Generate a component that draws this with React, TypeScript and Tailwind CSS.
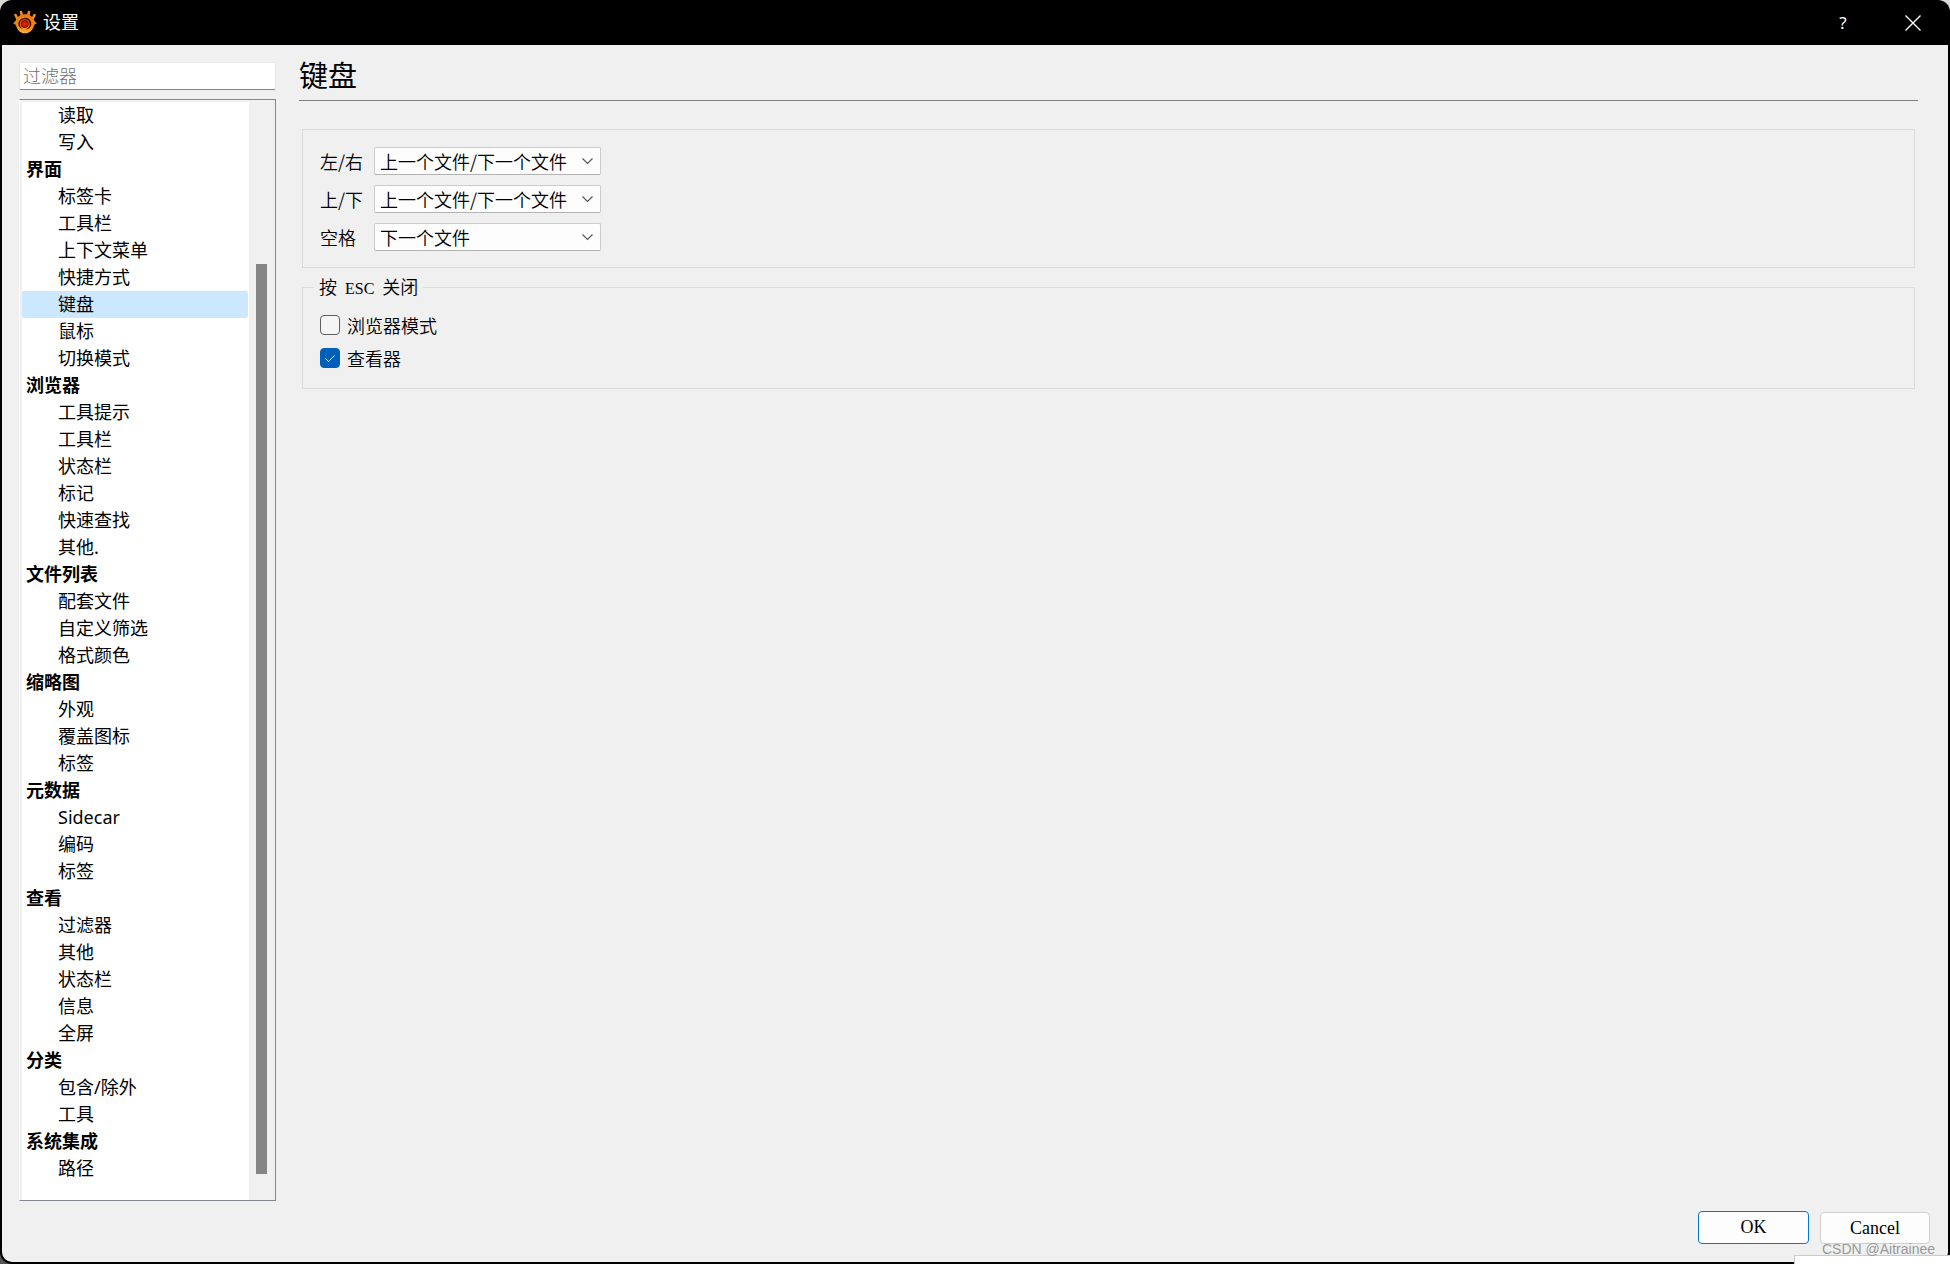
import React from "react";

type Entry = { label: string; heading?: boolean; selected?: boolean };

const h = (label: string): Entry => ({ label, heading: true });
const i = (label: string): Entry => ({ label });

const entries: Entry[] = [
  i("读取"), i("写入"),
  h("界面"), i("标签卡"), i("工具栏"), i("上下文菜单"), i("快捷方式"),
  { label: "键盘", selected: true }, i("鼠标"), i("切换模式"),
  h("浏览器"), i("工具提示"), i("工具栏"), i("状态栏"), i("标记"), i("快速查找"), i("其他."),
  h("文件列表"), i("配套文件"), i("自定义筛选"), i("格式颜色"),
  h("缩略图"), i("外观"), i("覆盖图标"), i("标签"),
  h("元数据"), i("Sidecar"), i("编码"), i("标签"),
  h("查看"), i("过滤器"), i("其他"), i("状态栏"), i("信息"), i("全屏"),
  h("分类"), i("包含/除外"), i("工具"),
  h("系统集成"), i("路径"),
];

function Logo() {
  return (
    <svg width="26" height="24" viewBox="0 0 26 24" aria-hidden="true">
      <defs>
        <linearGradient id="flame" x1="0" y1="0" x2="0" y2="1">
          <stop offset="0" stopColor="#f47a10" />
          <stop offset="0.6" stopColor="#f08418" />
          <stop offset="1" stopColor="#fbb23a" />
        </linearGradient>
        <radialGradient id="pupil">
          <stop offset="0" stopColor="#e03a24" />
          <stop offset="0.6" stopColor="#c01408" />
          <stop offset="1" stopColor="#8e0c04" />
        </radialGradient>
      </defs>
      <g stroke="#f58a1c" strokeWidth="2.600" strokeLinecap="round" fill="none">
        <path d="M5.500 9 L3.500 5" />
        <path d="M10 6 L9 2" />
        <path d="M16 6 L17 2" />
        <path d="M20.500 9 L22.500 5" />
      </g>
      <path d="M13 4.200 C17 4.200 20 6 21.500 9 C22.500 11 23.500 12.500 25 13.200 C22.500 14 22 15 21.500 17 C20 21 17 23.300 13 23.300 C9 23.300 6 21 4.500 17 C4 15 3.500 14 1 13.200 C2.500 12.500 3.500 11 4.500 9 C6 6 9 4.200 13 4.200 Z" fill="url(#flame)" />
      <path d="M12 8 C16.500 7 19.300 10 19.300 14 C19.300 17 17 19.300 13.500 19.500 C17 18 17.800 16 17.500 13.500 C17 10.500 14.500 9 11.500 9.500 C9 10 7.800 12 8 14.500 C8.200 16.500 9.200 18 11 19 C8 18.500 6.300 16.500 6.300 14 C6.300 11 8.500 8.500 12 8 Z" fill="#4a1c04" />
      <circle cx="12.700" cy="14" r="4" fill="url(#pupil)" />
    </svg>
  );
}

function Choice({ id, label, value, options }: { id: string; label: React.ReactNode; value: string; options: string[] }) {
  return (
    <div className="flex h-7 items-center">
      <label htmlFor={id} className="w-[54px] shrink-0 whitespace-nowrap">{label}</label>
      <div className="relative">
        <select
          id={id}
          defaultValue={value}
          className="block h-7 w-[227px] appearance-none rounded-[2px] border border-[#cccccc] border-b-[#b4b4b4] bg-[#fdfdfd] pl-[5px] pr-7 text-[18px] leading-6 outline-none"
        >
          {options.map((o) => (
            <option key={o}>{o}</option>
          ))}
        </select>
        <svg className="pointer-events-none absolute right-2 top-2.5" width="11" height="8" viewBox="0 0 11 8" fill="none" stroke="#555" strokeWidth="1.200" aria-hidden="true">
          <path d="M0.500 1.500 L5.500 6.500 L10.500 1.500" />
        </svg>
      </div>
    </div>
  );
}

function Tick({ label, checked }: { label: string; checked?: boolean }) {
  return (
    <label className="flex h-6 items-center gap-[7px]">
      <span className="relative block size-5">
        <input
          type="checkbox"
          defaultChecked={checked}
          className="peer block size-5 appearance-none rounded-[4px] border border-[#606060] bg-[#f5f5f5] checked:border-[#005fb8] checked:bg-[#005fb8]"
        />
        <svg className="pointer-events-none absolute inset-0 hidden peer-checked:block" width="20" height="20" viewBox="0 0 20 20" fill="none" stroke="#fff" aria-hidden="true">
          <path d="M5.500 10.500 L8.500 13.500 L14.500 7.500" />
        </svg>
      </span>
      <span>{label}</span>
    </label>
  );
}

const fileOptions = ["上一个文件/下一个文件", "下一个文件"];

export default function App() {
  return (
    <div className="relative flex min-h-screen flex-col bg-[linear-gradient(#d9dcd9_50%,#555_50%)] font-['Noto_Sans','Noto_Sans_CJK_SC',sans-serif] text-[18px] text-black">
      <div className="flex flex-1 flex-col overflow-hidden rounded-[12px] bg-black px-0.5 pb-0.5">
        <header className="flex h-[45px] items-center justify-between pl-2.5 text-white">
          <div className="flex items-center gap-[5px] pb-0.5">
            <Logo />
            <span className="leading-6">设置</span>
          </div>
          <div className="flex self-stretch">
            <button aria-label="帮助" className="flex w-[70px] items-center justify-center text-[17px]">?</button>
            <button aria-label="关闭" className="flex w-[70px] items-center justify-center">
              <svg width="16" height="16" viewBox="0 0 16 16" stroke="#fff" strokeWidth="1.400" aria-hidden="true">
                <path d="M0.500 0.500 L15.500 15.500 M15.500 0.500 L0.500 15.500" />
              </svg>
            </button>
          </div>
        </header>

        <div className="flex flex-1 flex-col rounded-b-[10px] bg-[#f0f0f0]">
          <div className="flex flex-1">
            <aside className="ml-[17px] flex w-[257px] shrink-0 flex-col pt-[17px]">
              <input
                type="text"
                aria-label="过滤器"
                placeholder="过滤器"
                className="h-7 rounded-[2px] border border-[#e8e8e8] border-b-[#868686] bg-white px-[3px] text-[18px] font-light outline-none placeholder:text-[#707070]"
              />
              <div className="mt-[9px] flex flex-1 border-y border-l border-r border-y-[#828790] border-l-white border-r-[#828790] pl-0.5 pt-0.5">
                <nav aria-label="设置" className="flex-1 bg-white">
                  <ul>
                    {entries.map((e, n) => (
                      <li key={n}>
                        <a
                          href="#"
                          aria-current={e.selected ? "page" : undefined}
                          className={
                            e.heading
                              ? "block h-[27px] pl-1 font-bold leading-[27px]"
                              : e.selected
                                ? "mr-px block h-[27px] rounded-[2px] bg-[#cce8ff] pl-9 leading-[27px]"
                                : "block h-[27px] pl-9 leading-[27px]"
                          }
                        >
                          {e.label}
                        </a>
                      </li>
                    ))}
                  </ul>
                </nav>
                <div className="flex w-[26px] flex-col pb-[26px] pl-[7px] pt-[162px]">
                  <div className="w-[11px] flex-1 bg-[#858585]" />
                </div>
              </div>
            </aside>

            <main className="ml-[23px] mr-[30px] flex-1 font-['Noto_Sans_CJK_SC',sans-serif]">
              <h1 className="mt-2 h-[48px] border-b border-[#808080] text-[29px] leading-[42px]">键盘</h1>
              <section className="mx-[3px] mt-7 flex flex-col gap-2.5 border border-[#dcdcdc] pb-4 pl-[17px] pt-[17px] font-[350]">
                <Choice id="lr" label="左/右" value="上一个文件/下一个文件" options={fileOptions} />
                <Choice id="ud" label="上/下" value="上一个文件/下一个文件" options={fileOptions} />
                <Choice id="sp" label="空格" value="下一个文件" options={fileOptions} />
              </section>
              <fieldset className="mx-[3px] mt-1.5 border border-[#dcdcdc] pb-[18px] pl-[17px] font-[350]">
                <legend className="-ml-1.5 px-[5px] leading-6">
                  按<span className="px-1 font-['Liberation_Serif',serif] text-[16px] font-normal"> ESC </span>关闭
                </legend>
                <div className="mt-3 flex flex-col gap-[9px]">
                  <Tick label="浏览器模式" />
                  <Tick label="查看器" checked />
                </div>
              </fieldset>
            </main>
          </div>

          <footer className="flex h-[61px] items-start justify-end gap-[11px] pr-[18px] pt-2.5 font-['Liberation_Serif',serif] text-[18px]">
            <button className="h-[33px] w-[111px] rounded-[4px] border border-[#0078d4] bg-[#fdfdfd]">OK</button>
            <button className="mt-px h-8 w-[110px] rounded-[4px] border border-[#d0d0d0] bg-[#fdfdfd]">Cancel</button>
          </footer>
        </div>
      </div>
      <div className="absolute bottom-0 right-0 h-[9px] w-[156px] border-l border-t border-[#c8cacf] bg-white" />
      <div className="absolute bottom-1.5 right-[15px] font-['Liberation_Sans',sans-serif] text-[14px] leading-[18px] text-[#999999]">CSDN @Aitrainee</div>
    </div>
  );
}
